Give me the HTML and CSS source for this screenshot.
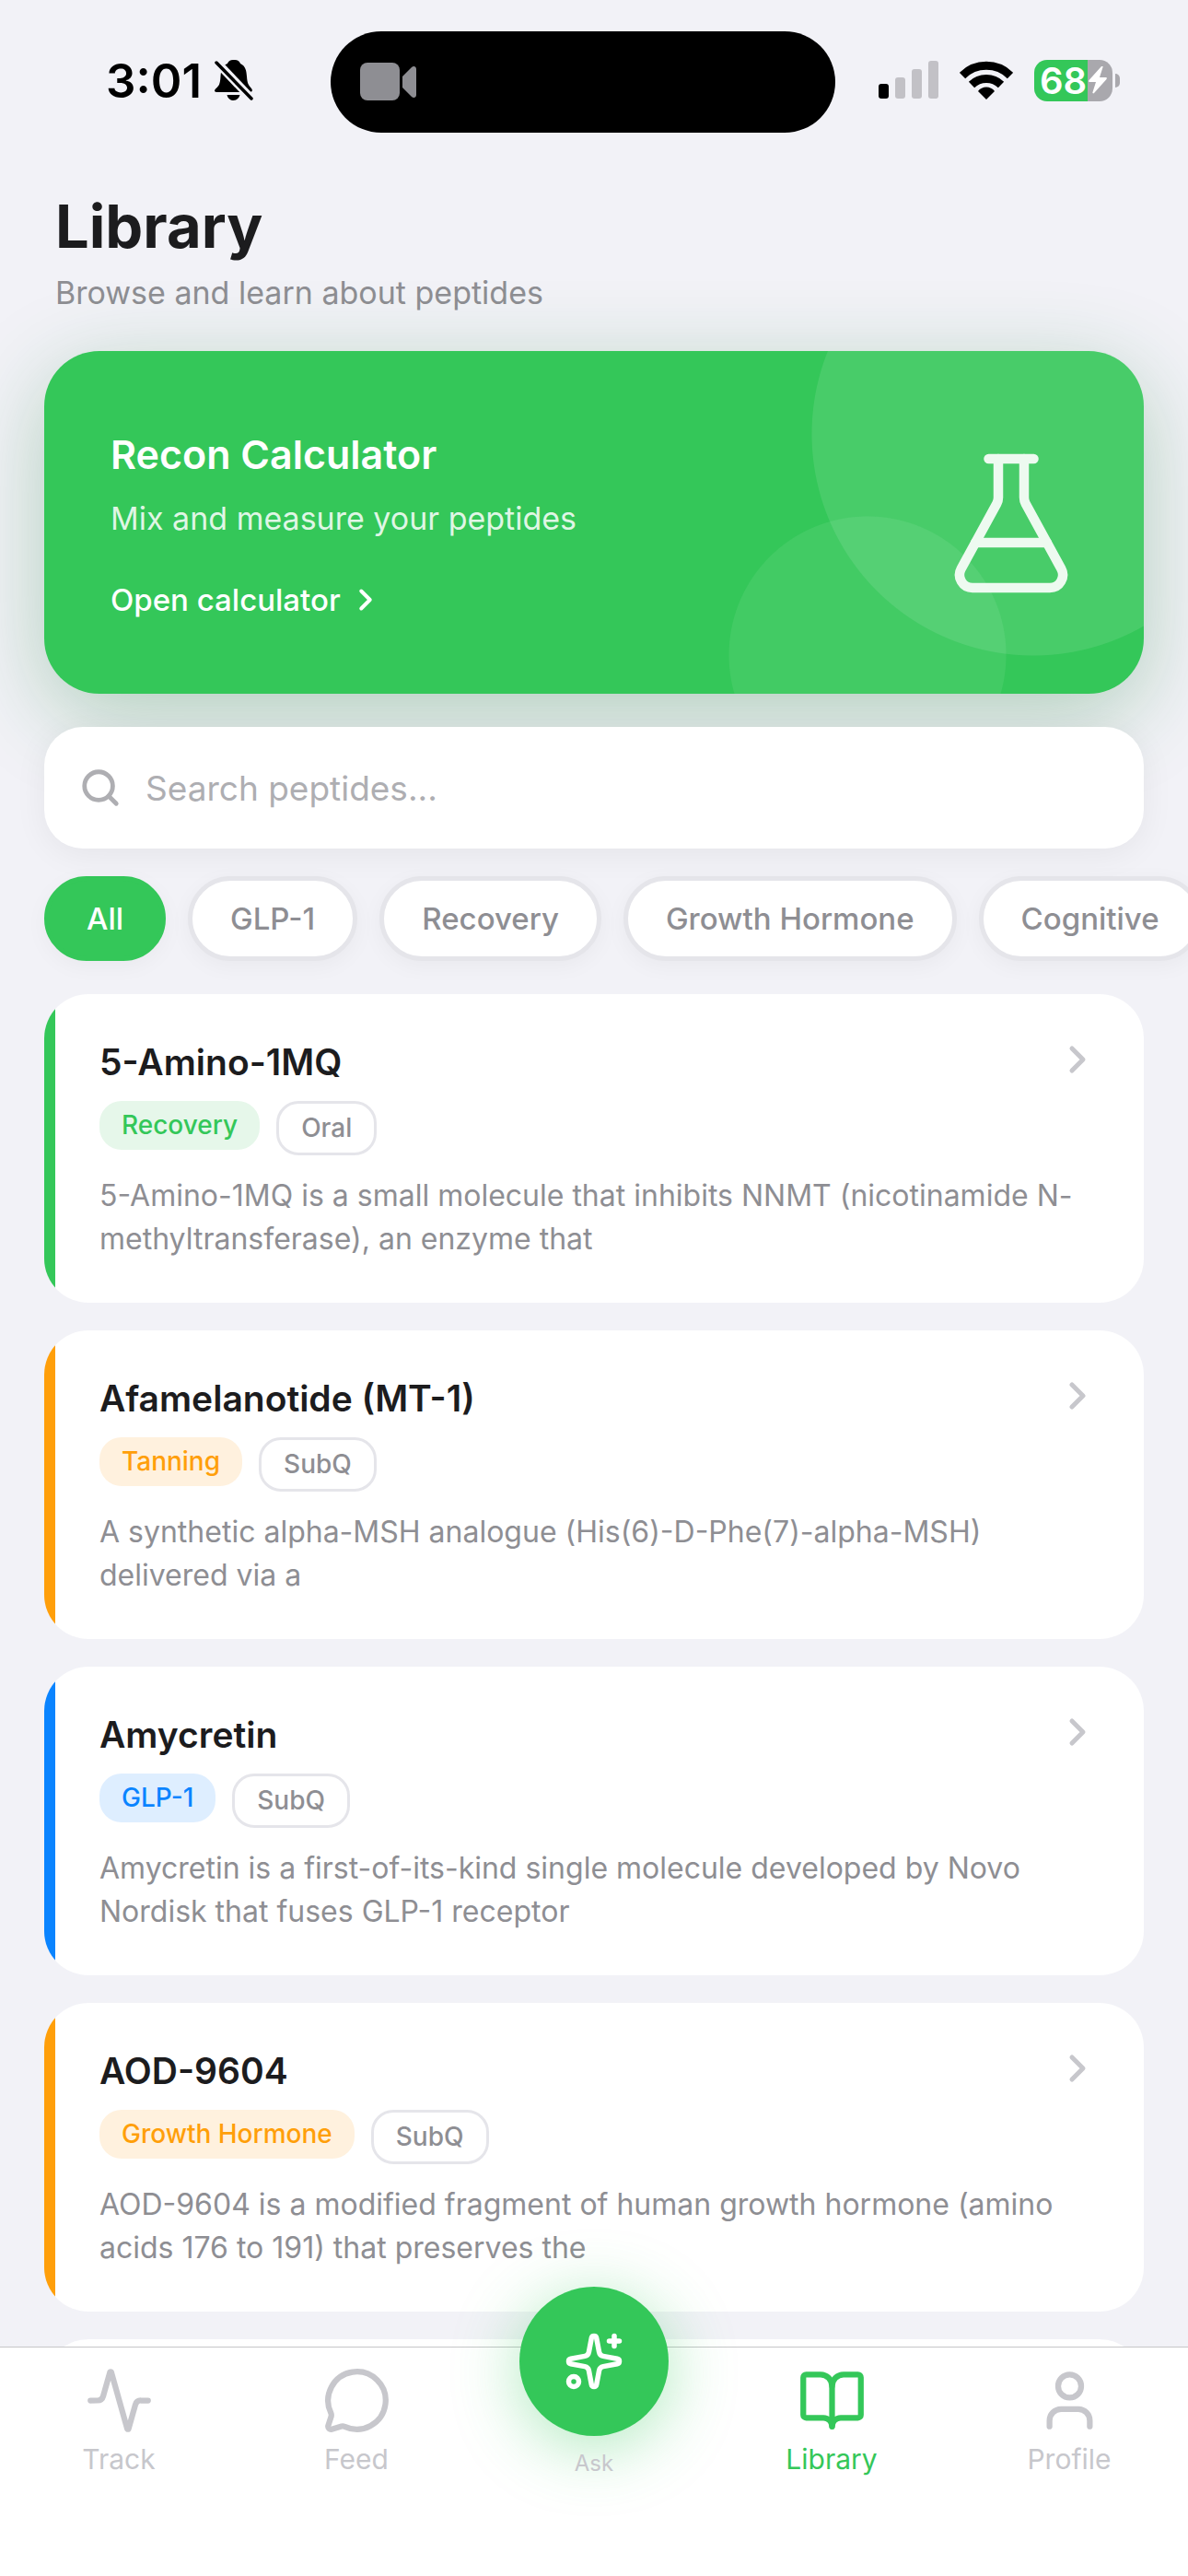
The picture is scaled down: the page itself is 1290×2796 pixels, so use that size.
FILE: index.html
```html
<!DOCTYPE html>
<html lang="en">
<head>
    <meta charset="UTF-8">
    <meta name="viewport" content="width=device-width, initial-scale=1.0">
    <title>Library</title>
    <link rel="stylesheet" href="styles.css">
</head>
<body>
    <div class="app">
        <div class="status-bar">
            <div class="status-left">
                <span class="time">3:01</span>
                <svg class="bell" viewBox="0 0 42 44" aria-hidden="true">
                    <path d="M20 0c-3 0-5 1.500-6 4C8 6 7 12 6.500 18 6 26 5 28 1.500 31-1 33.500 0 35 2 35h36c2.500 0 4-1.500 2-4-3.500-4-4.500-6-5-13-.5-6-1-11-7-14-1-2.500-3-4-6-4z"/>
                    <path d="M13.500 38h14c-1 4-4 6-7 6s-6-2-7-6z"/>
                    <path d="M2 2l38 40" stroke="#f2f2f7" stroke-width="9"/>
                    <path d="M2 3l38 39" stroke="#000" stroke-width="3.500" stroke-linecap="round"/>
                </svg>
            </div>
            <div class="island">
                <svg class="camera" viewBox="0 0 62 42" aria-hidden="true">
                    <rect x="0" y="0" width="43" height="41" rx="8"/>
                    <path d="M46 15 56 5c2-2 5-1 5 2v28c0 3-3 4-5 2L46 27z"/>
                </svg>
            </div>
            <div class="status-right">
                <svg class="signal" viewBox="0 0 65 42" aria-hidden="true">
                    <rect x="0" y="25" width="11" height="16" rx="3" fill="#000"/>
                    <rect x="18" y="18" width="11" height="23" rx="3"/>
                    <rect x="36" y="9" width="11" height="32" rx="3"/>
                    <rect x="54" y="0" width="11" height="41" rx="3"/>
                </svg>
                <svg class="wifi" viewBox="0 0 58 42" aria-hidden="true">
                    <path d="M3 16a37 37 0 0 1 52 0" stroke-width="9"/>
                    <path d="M13 26a23 23 0 0 1 32 0" stroke-width="9"/>
                    <path d="M20 33c4-6 14-6 18 0l-9 9z" class="wifi-dot"/>
                </svg>
                <div class="battery">
                    <div class="battery-body">
                        <span>68</span>
                        <svg viewBox="0 0 20 30" aria-hidden="true"><path d="M14 0c1-1 2 0 1.500 1L12 12h7c1 0 1 1 .5 2L6 29c-1 1-2 0-1.500-1L8 17H1c-1 0-1-1-.5-2z"/></svg>
                    </div>
                    <div class="battery-cap"></div>
                </div>
            </div>
        </div>

        <main class="content">
            <header class="page-header">
                <h1>Library</h1>
                <p class="subtitle">Browse and learn about peptides</p>
            </header>

            <a href="#calculator" class="hero">
                <div class="hero-text">
                    <h2>Recon Calculator</h2>
                    <p>Mix and measure your peptides</p>
                    <span class="hero-link">
                        Open calculator
                        <svg class="icon" viewBox="0 0 24 24" aria-hidden="true"><path d="m9 18 6-6-6-6"/></svg>
                    </span>
                </div>
                <svg class="icon flask" viewBox="0 0 24 24" aria-hidden="true">
                    <path d="M14 2v6a2 2 0 0 0 .245.96l5.510 10.080A2 2 0 0 1 18 22H6a2 2 0 0 1-1.755-2.960l5.510-10.080A2 2 0 0 0 10 8V2"/>
                    <path d="M6.453 15h11.094"/>
                    <path d="M8.500 2h7"/>
                </svg>
            </a>

            <label class="search">
                <svg class="icon" viewBox="0 0 24 24" aria-hidden="true"><circle cx="11" cy="11" r="8"/><path d="m21 21-4.340-4.340"/></svg>
                <input type="search" placeholder="Search peptides..." aria-label="Search peptides">
            </label>

            <div class="chips">
                <button type="button" class="chip active">All</button>
                <button type="button" class="chip">GLP-1</button>
                <button type="button" class="chip">Recovery</button>
                <button type="button" class="chip">Growth Hormone</button>
                <button type="button" class="chip">Cognitive</button>
            </div>

            <div class="cards">
                <a href="#5-amino-1mq" class="card green">
                    <div class="card-head">
                        <h3>5-Amino-1MQ</h3>
                        <svg class="icon" viewBox="0 0 24 24" aria-hidden="true"><path d="m9 18 6-6-6-6"/></svg>
                    </div>
                    <div class="tags">
                        <span class="tag">Recovery</span>
                        <span class="tag outline">Oral</span>
                    </div>
                    <p>5-Amino-1MQ is a small molecule that inhibits NNMT (nicotinamide N-methyltransferase), an enzyme that</p>
                </a>

                <a href="#afamelanotide" class="card orange">
                    <div class="card-head">
                        <h3>Afamelanotide (MT-1)</h3>
                        <svg class="icon" viewBox="0 0 24 24" aria-hidden="true"><path d="m9 18 6-6-6-6"/></svg>
                    </div>
                    <div class="tags">
                        <span class="tag">Tanning</span>
                        <span class="tag outline">SubQ</span>
                    </div>
                    <p>A synthetic alpha-MSH analogue (His(6)-D-Phe(7)-alpha-MSH) delivered via a</p>
                </a>

                <a href="#amycretin" class="card blue">
                    <div class="card-head">
                        <h3>Amycretin</h3>
                        <svg class="icon" viewBox="0 0 24 24" aria-hidden="true"><path d="m9 18 6-6-6-6"/></svg>
                    </div>
                    <div class="tags">
                        <span class="tag">GLP-1</span>
                        <span class="tag outline">SubQ</span>
                    </div>
                    <p>Amycretin is a first-of-its-kind single molecule developed by Novo Nordisk that fuses GLP-1 receptor</p>
                </a>

                <a href="#aod-9604" class="card orange">
                    <div class="card-head">
                        <h3>AOD-9604</h3>
                        <svg class="icon" viewBox="0 0 24 24" aria-hidden="true"><path d="m9 18 6-6-6-6"/></svg>
                    </div>
                    <div class="tags">
                        <span class="tag">Growth Hormone</span>
                        <span class="tag outline">SubQ</span>
                    </div>
                    <p>AOD-9604 is a modified fragment of human growth hormone (amino acids 176 to 191) that preserves the</p>
                </a>

                <div class="card"></div>
            </div>
        </main>

        <nav class="tab-bar">
            <a href="#track" class="tab">
                <svg class="icon" viewBox="0 0 24 24" aria-hidden="true"><path d="M22 12h-2.480a2 2 0 0 0-1.930 1.460l-2.350 8.360a.25.25 0 0 1-.48 0L9.240 2.180a.25.25 0 0 0-.48 0l-2.350 8.360A2 2 0 0 1 4.490 12H2"/></svg>
                Track
            </a>
            <a href="#feed" class="tab">
                <svg class="icon" viewBox="0 0 24 24" aria-hidden="true"><path d="M2.992 16.342a2 2 0 0 1 .094 1.167l-1.065 3.290a1 1 0 0 0 1.236 1.168l3.413-.998a2 2 0 0 1 1.099.092 10 10 0 1 0-4.777-4.719"/></svg>
                Feed
            </a>
            <a href="#ask" class="tab ask">
                <span class="fab">
                    <svg class="icon" viewBox="0 0 24 24" aria-hidden="true">
                        <path d="M11.017 2.814a1 1 0 0 1 1.966 0l1.051 5.558a2 2 0 0 0 1.594 1.594l5.558 1.051a1 1 0 0 1 0 1.966l-5.558 1.051a2 2 0 0 0-1.594 1.594l-1.051 5.558a1 1 0 0 1-1.966 0l-1.051-5.558a2 2 0 0 0-1.594-1.594l-5.558-1.051a1 1 0 0 1 0-1.966l5.558-1.051a2 2 0 0 0 1.594-1.594z"/>
                        <path d="M20 2v4"/>
                        <path d="M22 4h-4"/>
                        <circle cx="4" cy="20" r="2"/>
                    </svg>
                </span>
                Ask
            </a>
            <a href="#library" class="tab active">
                <svg class="icon" viewBox="0 0 24 24" aria-hidden="true">
                    <path d="M12 7v14"/>
                    <path d="M3 18a1 1 0 0 1-1-1V4a1 1 0 0 1 1-1h5a4 4 0 0 1 4 4 4 4 0 0 1 4-4h5a1 1 0 0 1 1 1v13a1 1 0 0 1-1 1h-6a3 3 0 0 0-3 3 3 3 0 0 0-3-3z"/>
                </svg>
                Library
            </a>
            <a href="#profile" class="tab">
                <svg class="icon" viewBox="0 0 24 24" aria-hidden="true"><path d="M19 21v-2a4 4 0 0 0-4-4H9a4 4 0 0 0-4 4v2"/><circle cx="12" cy="7" r="4"/></svg>
                Profile
            </a>
        </nav>
    </div>
</body>
</html>
```

FILE: styles.css
```css
* {
    box-sizing: border-box;
}
body {
    font-family: Inter, "Liberation Sans", sans-serif;
    margin: 0;
    background: #f2f2f7;
    color: #1c1c1e;
}
h1, h2, h3, p {
    margin: 0;
}
a {
    color: inherit;
    text-decoration: none;
}
.app {
    height: 100vh;
    display: flex;
    flex-direction: column;
    overflow: hidden;
}
.icon {
    flex: none;
    fill: none;
    stroke: currentColor;
    stroke-width: 2;
    stroke-linecap: round;
    stroke-linejoin: round;
}

/* Status bar */
.status-bar {
    display: grid;
    grid-template-columns: 359fr 548fr 383fr;
    align-items: center;
    padding-top: 34px;
    flex: none;
}
.status-left {
    display: flex;
    align-items: center;
    justify-content: flex-end;
    gap: 14px;
    padding: 0 84px 4px 0;
}
.time {
    font-size: 51px;
    font-weight: 600;
    color: #000;
}
.bell {
    width: 42px;
    height: 44px;
}
.island {
    display: flex;
    align-items: center;
    height: 110px;
    padding-left: 32px;
    border-radius: 55px;
    background: #000;
}
.camera {
    width: 62px;
    height: 42px;
    fill: #8e8e93;
}
.status-right {
    display: flex;
    align-items: center;
    gap: 23px;
    padding: 0 0 4px 47px;
}
.signal {
    width: 65px;
    height: 42px;
    fill: #c2c1c6;
}
.wifi {
    width: 58px;
    height: 42px;
    fill: none;
    stroke: #000;
}
.wifi-dot {
    fill: #000;
    stroke: none;
}
.battery {
    display: flex;
    align-items: center;
    gap: 3px;
}
.battery-body {
    display: flex;
    align-items: center;
    gap: 2px;
    width: 85px;
    height: 45px;
    padding-left: 6px;
    border-radius: 14px;
    background: linear-gradient(90deg, #34c759 68%, #a9a8ad 68%);
    color: #fff;
    font-size: 40px;
    font-weight: 600;
}
.battery-body svg {
    width: 20px;
    height: 30px;
    flex: none;
    fill: #fff;
}
.battery-cap {
    width: 5px;
    height: 15px;
    border-radius: 0 5px 5px 0;
    background: #a9a8ad;
}

/* Page */
.content {
    flex: 1;
    min-height: 0;
    padding: 60px 48px 0;
    overflow: hidden;
}
.page-header {
    padding: 0 12px;
}
h1 {
    font-size: 65px;
    line-height: 84px;
    font-weight: 700;
}
.subtitle {
    margin-top: 8px;
    font-size: 34px;
    line-height: 44px;
    color: #8e8e93;
}
.hero {
    position: relative;
    display: flex;
    align-items: center;
    justify-content: space-between;
    margin-top: 41px;
    padding: 82px 60px 80px 72px;
    border-radius: 60px;
    background: #34c759;
    color: #fff;
    box-shadow: 0 24px 96px rgba(25, 126, 54, 0.3);
}
/* Decorative circles, clipped to the banner */
.hero::before {
    content: "";
    position: absolute;
    inset: 0;
    border-radius: 60px;
    background:
        radial-gradient(circle at calc(100% - 120px) 90px, rgba(255, 255, 255, 0.1) 240px, transparent 241px),
        radial-gradient(circle at calc(100% - 300px) 330px, rgba(255, 255, 255, 0.07) 150px, transparent 151px);
}
.hero h2 {
    font-size: 43px;
    line-height: 60px;
    font-weight: 600;
}
.hero p {
    margin-top: 18px;
    font-size: 34px;
    line-height: 44px;
    color: rgba(255, 255, 255, 0.85);
}
.hero-link {
    display: flex;
    align-items: center;
    gap: 8px;
    margin-top: 44px;
    font-size: 33px;
    line-height: 44px;
    font-weight: 500;
}
.hero-link .icon {
    width: 38px;
    height: 38px;
    stroke-width: 2.5;
}
.flask {
    position: relative;
    width: 168px;
    height: 168px;
    stroke-width: 1.5;
    opacity: 0.9;
}
.search {
    position: relative;
    display: flex;
    align-items: center;
    gap: 26px;
    height: 132px;
    margin-top: 36px;
    padding: 0 38px;
    border-radius: 42px;
    background: #fff;
    color: #aeaeb2;
    box-shadow: 0 6px 36px rgba(0, 0, 0, 0.06);
}
.search .icon {
    width: 46px;
    height: 46px;
    stroke-width: 2.5;
}
.search input {
    flex: 1;
    border: 0;
    padding: 0;
    outline: none;
    background: none;
    font: inherit;
    font-size: 37px;
    color: #1c1c1e;
}
.search input::placeholder {
    color: #aeaeb2;
}
.chips {
    display: flex;
    gap: 24px;
    margin-top: 30px;
}
.chip {
    flex: none;
    height: 92px;
    padding: 0 41px;
    border: 5px solid #e5e5ea;
    border-radius: 46px;
    background: #fff;
    color: #8e8e93;
    font-family: inherit;
    font-size: 33px;
    font-weight: 500;
    box-shadow: 0 6px 24px rgba(0, 0, 0, 0.04);
}
.chip.active {
    border-color: #34c759;
    background: #34c759;
    color: #fff;
}

/* Peptide cards */
.cards {
    display: flex;
    flex-direction: column;
    gap: 30px;
    margin-top: 36px;
}
.card {
    --accent: #c7c7cc;
    --tint: #f2f2f7;
    min-height: 335px;
    padding: 47px 48px 46px 60px;
    border-radius: 48px;
    background: linear-gradient(90deg, var(--accent) 12px, #fff 12px);
}
.card.green {
    --accent: #34c759;
    --tint: #e6f7ea;
}
.card.orange {
    --accent: #ff9f0a;
    --tint: #fff1de;
}
.card.blue {
    --accent: #0a84ff;
    --tint: #deeeff;
}
.card-head {
    display: flex;
    justify-content: space-between;
}
.card h3 {
    font-size: 39px;
    line-height: 54px;
    font-weight: 600;
}
.card-head .icon {
    width: 48px;
    height: 48px;
    color: #c7c7cc;
    stroke-width: 2.5;
}
.tags {
    display: flex;
    align-items: flex-start;
    gap: 18px;
    margin-top: 15px;
    height: 59px;
}
.tag {
    padding: 8px 24px;
    border-radius: 24px;
    background: var(--tint);
    color: var(--accent);
    font-size: 28px;
    line-height: 37px;
    font-weight: 500;
}
.tag.outline {
    border: 3px solid #e5e5ea;
    background: none;
    color: #8e8e93;
}
.card p {
    margin-top: 20px;
    padding-right: 12px;
    font-size: 32px;
    line-height: 47px;
    color: #8e8e93;
}

/* Tab bar */
.tab-bar {
    position: relative;
    display: grid;
    grid-template-columns: repeat(5, 1fr);
    height: 249px;
    flex: none;
    padding-top: 20px;
    border-top: 1px solid #c6c6c8;
    background: #fff;
}
.tab {
    display: flex;
    flex-direction: column;
    align-items: center;
    gap: 4px;
    font-size: 30px;
    line-height: 44px;
    color: #c7c7cc;
}
.tab.active {
    color: #34c759;
}
.tab > .icon {
    width: 75px;
    height: 75px;
}
.tab.ask {
    gap: 8px;
    font-size: 24px;
}
.fab {
    display: flex;
    align-items: center;
    justify-content: center;
    width: 162px;
    height: 162px;
    margin-top: -86px;
    border-radius: 50%;
    background: #34c759;
    color: #fff;
    box-shadow: 0 12px 72px rgba(52, 199, 89, 0.4);
}
.fab .icon {
    width: 66px;
    height: 66px;
}
```
